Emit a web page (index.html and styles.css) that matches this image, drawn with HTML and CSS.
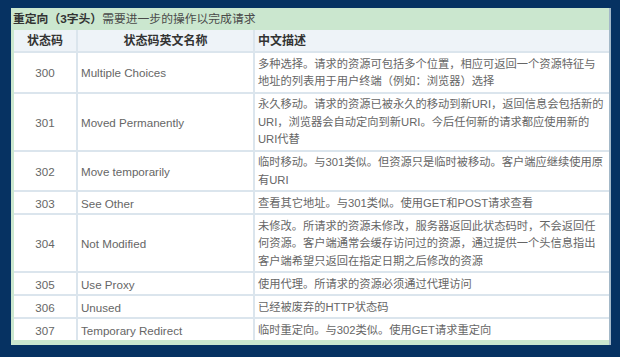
FILE: index.html
```html
<!DOCTYPE html>
<html lang="zh-CN">
<head>
<meta charset="utf-8">
<title>重定向（3字头）</title>
<link rel="stylesheet" href="styles.css">
</head>
<body>
<div class="panel">
  <div class="title"><b>重定向（3字头）</b>需要进一步的操作以完成请求</div>
  <table class="codes">
    <thead>
      <tr>
        <th class="c-code">状态码</th>
        <th class="c-name">状态码英文名称</th>
        <th class="c-desc">中文描述</th>
      </tr>
    </thead>
    <tbody>
      <tr>
        <td class="code">300</td>
        <td class="name">Multiple Choices</td>
        <td class="desc">多种选择。请求的资源可包括多个位置，相应可返回一个资源特征与<br>地址的列表用于用户终端（例如：浏览器）选择</td>
      </tr>
      <tr>
        <td class="code">301</td>
        <td class="name">Moved Permanently</td>
        <td class="desc">永久移动。请求的资源已被永久的移动到新URI，返回信息会包括新的<br>URI，浏览器会自动定向到新URI。今后任何新的请求都应使用新的<br>URI代替</td>
      </tr>
      <tr>
        <td class="code">302</td>
        <td class="name">Move temporarily</td>
        <td class="desc">临时移动。与301类似。但资源只是临时被移动。客户端应继续使用原<br>有URI</td>
      </tr>
      <tr>
        <td class="code">303</td>
        <td class="name">See Other</td>
        <td class="desc">查看其它地址。与301类似。使用GET和POST请求查看</td>
      </tr>
      <tr>
        <td class="code">304</td>
        <td class="name">Not Modified</td>
        <td class="desc">未修改。所请求的资源未修改，服务器返回此状态码时，不会返回任<br>何资源。客户端通常会缓存访问过的资源，通过提供一个头信息指出<br>客户端希望只返回在指定日期之后修改的资源</td>
      </tr>
      <tr>
        <td class="code">305</td>
        <td class="name">Use Proxy</td>
        <td class="desc">使用代理。所请求的资源必须通过代理访问</td>
      </tr>
      <tr>
        <td class="code">306</td>
        <td class="name">Unused</td>
        <td class="desc">已经被废弃的HTTP状态码</td>
      </tr>
      <tr>
        <td class="code">307</td>
        <td class="name">Temporary Redirect</td>
        <td class="desc">临时重定向。与302类似。使用GET请求重定向</td>
      </tr>
    </tbody>
  </table>
</div>
</body>
</html>
```
FILE: styles.css
```css
html, body {
  margin: 0;
  padding: 0;
}
body {
  background: #063262;
  width: 620px;
  height: 357px;
  overflow: hidden;
  font-family: "Liberation Sans", "Noto Sans CJK SC", sans-serif;
}
.panel {
  margin: 8px 0 0 11px;
  width: 600px;
  box-sizing: border-box;
  padding: 0 0 5px 3px;
  background: #cbe7cf;
  border-right: 2px solid #a3b8c8;
}
.title {
  height: 22px;
  line-height: 22px;
  margin-left: -1px;
  font-size: 11.8px;
  color: #4a4a4a;
  white-space: nowrap;
}
.title b {
  color: #333;
  font-weight: bold;
}
.codes {
  width: 595px;
  table-layout: fixed;
  border-collapse: separate;
  border-spacing: 0;
  background: #fff;
}
.codes th,
.codes td {
  box-sizing: border-box;
  border-bottom: 2px solid #dbe5ed;
  border-right: 2px solid #dbe5ed;
  line-height: 17.5px;
  padding: 2.5px 3px 1px;
  vertical-align: middle;
  color: #666;
}
.codes th:last-child,
.codes td:last-child {
  border-right: none;
}
.codes tbody tr:last-child td {
  border-bottom: none;
}
.codes th {
  background: #eef3f8;
  color: #333;
  font-size: 12px;
  font-weight: bold;
}
.c-code { width: 64px; text-align: center; }
.c-name { width: 177px; text-align: center; }
.c-desc { width: 354px; text-align: left; }
.code {
  text-align: center;
  font-size: 11.6px;
}
.name {
  font-size: 11.6px;
  white-space: nowrap;
}
.desc {
  font-size: 11.25px;
  white-space: nowrap;
  overflow: hidden;
}
```
